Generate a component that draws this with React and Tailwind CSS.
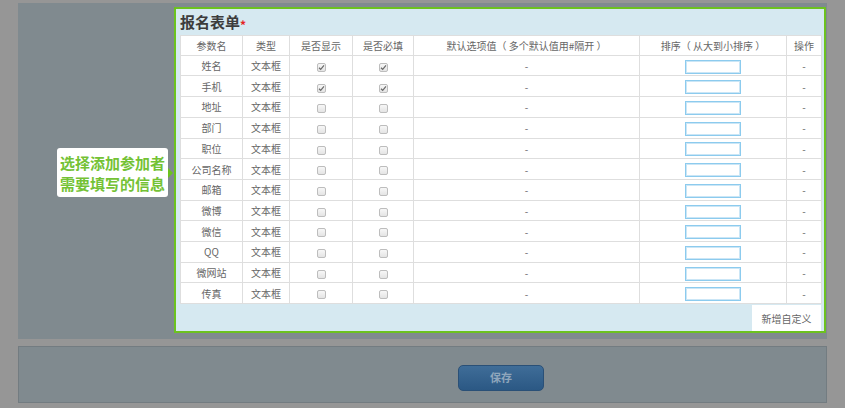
const rows = [
  { name: "姓名", show: true, req: true },
  { name: "手机", show: true, req: true },
  { name: "地址" },
  { name: "部门" },
  { name: "职位" },
  { name: "公司名称" },
  { name: "邮箱" },
  { name: "微博" },
  { name: "微信" },
  { name: "QQ" },
  { name: "微网站" },
  { name: "传真" },
];

const font = { fontFamily: '"Noto Sans CJK SC", "Noto Sans", sans-serif' };

function Box({ checked }) {
  return (
    <span className="inline-flex items-center justify-center w-[9px] h-[9px] rounded-[2px] border border-[#bdbdbd] bg-gradient-to-b from-[#f7f7f7] to-[#e4e4e4] align-middle">
      {checked && (
        <svg width="7" height="7" viewBox="0 0 7 7">
          <path d="M1 3.8 L2.7 5.4 L6 1.4" fill="none" stroke="#6a6a6a" strokeWidth="1.2" />
        </svg>
      )}
    </span>
  );
}

export default function App() {
  const td = "border border-[#dedede] text-center align-middle p-0";
  return (
    <div
      className="w-[845px] h-[408px] bg-[#969696] pt-[3px] px-[18px] flex flex-col gap-[7px] text-[10px] text-[#666]"
      style={font}
    >
      <div className="h-[336px] bg-[#808a8f] flex">
        <div className="w-[156px] flex items-center justify-end pr-[1px] pt-[3px]">
          <div className="flex items-center">
            <div className="bg-white rounded-[3px] w-[111px] h-[49px] flex flex-col justify-center items-center text-[15px] font-bold leading-[21px] text-[#74c235]">
              <span>选择添加参加者</span>
              <span>需要填写的信息</span>
            </div>
            <span className="w-0 h-0 border-y-[5px] border-y-transparent border-l-[5px] border-l-[#6cc21f]" />
          </div>
        </div>
        <div className="mt-[4px] w-[652px] h-[326px] border-2 border-[#6cc21f] bg-[#d6e9f1] flex flex-col pl-[4px] pr-[3px]">
          <div className="h-[28px] flex items-center text-[15px] font-bold text-[#3c3c3c] pt-[1px]">
            报名表单<span className="text-[#e52222] text-[12px] self-start mt-[6px]">*</span>
          </div>
          <table className="w-[641px] border-collapse bg-white table-fixed">
            <colgroup>
              <col className="w-[62px]" />
              <col className="w-[47px]" />
              <col className="w-[63px]" />
              <col className="w-[61px]" />
              <col className="w-[226px]" />
              <col className="w-[147px]" />
              <col className="w-[35px]" />
            </colgroup>
            <thead>
              <tr className="h-[20px]">
                <td className={td}>参数名</td>
                <td className={td}>类型</td>
                <td className={td}>是否显示</td>
                <td className={td}>是否必填</td>
                <td className={td}>默认选项值（ 多个默认值用#隔开 ）</td>
                <td className={td}>排序（ 从大到小排序 ）</td>
                <td className={td}>操作</td>
              </tr>
            </thead>
            <tbody>
              {rows.map((r) => (
                <tr key={r.name} className="h-[20.7px]">
                  <td className={td}>{r.name}</td>
                  <td className={td}>文本框</td>
                  <td className={td}><Box checked={r.show} /></td>
                  <td className={td}><Box checked={r.req} /></td>
                  <td className={td}>-</td>
                  <td className={td}>
                    <span className="inline-block align-middle w-[56px] h-[14px] border border-[#8ccbee] shadow-[inset_0_0_0_1px_#cbe6f6] bg-white" />
                  </td>
                  <td className={td}>-</td>
                </tr>
              ))}
            </tbody>
          </table>
          <div className="flex justify-end mt-[1px]">
            <div className="w-[69px] h-[26px] bg-white flex items-center justify-center text-[10px] text-[#666]">
              新增自定义
            </div>
          </div>
        </div>
      </div>
      <div className="h-[57px] bg-[#808a8f] border border-[#737c81] flex items-center pl-[439px]">
        <div className="w-[86px] h-[26px] rounded-[5px] bg-gradient-to-b from-[#3f6d98] to-[#2b5884] border border-[#2a5077] flex items-center justify-center text-[11px] font-bold text-[#8fa6bc] mt-[6px]">
          保存
        </div>
      </div>
    </div>
  );
}
